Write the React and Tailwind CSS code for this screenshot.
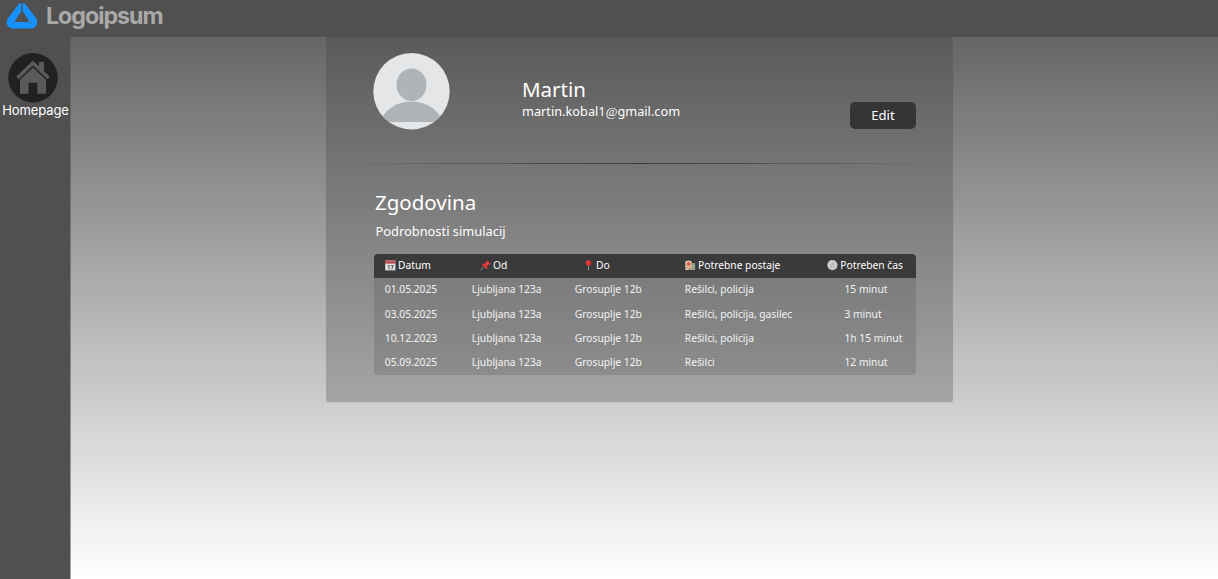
const text = "font-['Noto_Sans','Open_Sans',sans-serif]";

function LogoMark() {
  return (
    <svg className="h-[26px] w-8 shrink-0" viewBox="0 0 32 26" fill="none">
      <path d="M15.300 0C14 .1 12.900 .8 12 2L1.800 15.500C-.8 19.300 1.500 25.400 6.500 25.400h19c5 0 7.300-6.100 4.700-9.900L20 2C19.100 .8 18 .1 16.700 0v8L22.600 17.200c.6 1 .2 1.800-.8 1.800H10.200c-1 0-1.400-.8-.8-1.800L15.300 8Z" fill="#1492ff" />
      <path d="M10 18.700 6.200 20M22 18.700 25.800 20" stroke="#4b6a88" strokeWidth=".8" />
    </svg>
  );
}

function HomeIcon() {
  return (
    <svg className="size-[50px]" viewBox="0 0 50 50">
      <circle cx="25" cy="24.700" r="24.700" fill="#212121" />
      <g fill="#5a5a5a">
        <path d="M25 7.600 31 13.200V8.800h5v9.200l5.700 5.600-2.200 2.700L25 12.600 10.500 26.300l-2.200-2.700Z" />
        <path d="M25 14.500 38 26.800V40.700h-8.700V29.800h-8.800v10.900H12V26.800Z" />
      </g>
    </svg>
  );
}

function Avatar() {
  return (
    <svg className="size-[77px] shrink-0" viewBox="0 0 77 77">
      <defs>
        <clipPath id="avatar-circle"><circle cx="38.500" cy="38.300" r="38.200" /></clipPath>
      </defs>
      <g clipPath="url(#avatar-circle)">
        <rect width="77" height="77" fill="#e4e6e8" />
        <ellipse cx="38.500" cy="31.800" rx="15" ry="16.200" fill="#aeb4b8" />
        <path d="M7 69C12 56 24 48.500 38.500 48.500S65 56 70 69Z" fill="#aeb4b8" />
      </g>
    </svg>
  );
}

function CalendarIcon() {
  return (
    <svg className="h-[11px] w-[11px]" viewBox="0 0 11 11">
      <rect x=".2" y=".2" width="10.200" height="10.200" fill="#dedede" />
      <rect x=".2" y=".2" width="10.200" height="3.400" fill="#b9474b" />
      <path d="M2 1.200h1M4.200 1.200h1M6.400 1.200h1M8.500 1.200h1" stroke="#ddd" strokeWidth=".6" />
      <path d="M3 6 4 5.300V9.300M5.600 5.600h2.600L6.700 9.300" fill="none" stroke="#444" strokeWidth=".9" />
    </svg>
  );
}

function PushpinIcon() {
  return (
    <svg className="h-[11px] w-[11px]" viewBox="0 0 11 11">
      <path d="M4.300 6.500.6 10.300" stroke="#aaa" strokeWidth=".8" />
      <path d="m7.100.2 3.700 3.700-1.200.7-.9-.1-1.500 1.700.2 2.300-.9.800L1.700 4.500l.9-.8 2.200.1 1.700-1.700-.1-1.100Z" fill="#d93636" />
      <path d="m5.500 4.800 2-2" stroke="#f27777" strokeWidth=".7" />
    </svg>
  );
}

function RoundPinIcon() {
  return (
    <svg className="h-[11px] w-[11px]" viewBox="0 0 11 11">
      <path d="M5.500 4v6.700" stroke="#999" strokeWidth=".9" />
      <circle cx="5.500" cy="2.900" r="2.700" fill="#e23030" />
      <circle cx="4.700" cy="2.100" r=".7" fill="#f17b75" />
    </svg>
  );
}

function StationIcon() {
  return (
    <svg className="h-[11px] w-[11px]" viewBox="0 0 11 11">
      <path d="M.3 1.200 3.500.4l3.200.8v8.800H.3Z" fill="#e0c8a0" />
      <path d="M6.200 3.200h3.900V10H6.200Z" fill="#a9ac88" />
      <path d="M7 4.700h.9M8.700 4.700h.9M7 6.700h.9M8.700 6.700h.9M7 8.700h.9M8.700 8.700h.9" stroke="#6f98a4" />
      <circle cx="3.600" cy="3.900" r="2" fill="#e5594f" />
      <path d="M1.100 7h1.300v1.500H1.100ZM3.700 7.500h1.800V10H3.700Z" fill="#a57561" />
    </svg>
  );
}

function ClockIcon() {
  return (
    <svg className="h-[11px] w-[11px]" viewBox="0 0 11 11">
      <circle cx="5.400" cy="5.100" r="5.100" fill="#cecece" />
      <path d="M5.500 1.500v4.200M4 4v5M7 5v4" stroke="#a0a0a0" strokeWidth=".7" />
    </svg>
  );
}

const columns = [
  { label: "Datum", Icon: CalendarIcon, pad: "pl-0" },
  { label: "Od", Icon: PushpinIcon, pad: "pl-2" },
  { label: "Do", Icon: RoundPinIcon, pad: "pl-2" },
  { label: "Potrebne postaje", Icon: StationIcon, pad: "pl-0" },
  { label: "Potreben čas", Icon: ClockIcon, pad: "pl-0 -ml-[17.500px]" },
];

const rows = [
  ["01.05.2025", "Ljubljana 123a", "Grosuplje 12b", "Rešilci, policija", "15 minut"],
  ["03.05.2025", "Ljubljana 123a", "Grosuplje 12b", "Rešilci, policija, gasilec", "3 minut"],
  ["10.12.2023", "Ljubljana 123a", "Grosuplje 12b", "Rešilci, policija", "1h 15 minut"],
  ["05.09.2025", "Ljubljana 123a", "Grosuplje 12b", "Rešilci", "12 minut"],
];

const grid = "grid grid-cols-[87px_103px_110px_159.700px_1fr] items-center pl-[10.800px] whitespace-nowrap";

export default function App() {
  return (
    <div className={`flex h-[579px] w-full flex-col overflow-hidden bg-[#505050] text-white ${text}`}>
      <header className="flex h-[37px] shrink-0 items-start gap-2 pl-1.5 pt-[3px]">
        <LogoMark />
        <span className="font-['Inter',sans-serif] text-[23.200px] font-bold leading-[26px] tracking-[-1px] text-[#a9a9a9]">Logoipsum</span>
      </header>
      <div className="flex min-h-0 flex-1">
        <nav className="flex w-[70px] shrink-0 flex-col items-center pt-4">
          <a className="flex flex-col items-start">
            <span className="ml-[7px] block"><HomeIcon /></span>
            <span className="ml-px font-['Inter',sans-serif] text-[13px] leading-[15px] tracking-[-0.120px]">Homepage</span>
          </a>
        </nav>
        <main className="flex-1 border-l border-[#505050]/50 bg-linear-to-b/srgb from-[#666666] to-white pl-[255px]">
          <section className="h-[364.500px] w-[627px] rounded-b-[3px] bg-[#3c3c3c]/28 pt-4 shadow-[0_1px_1px_rgba(0,0,0,0.05)]">
            <div className="flex h-[77px] items-start pl-[47px]">
              <Avatar />
              <div className="ml-[72px] w-[328px] pt-[22px]">
                <h1 className="text-[20.500px] leading-7">Martin</h1>
                <p className="text-[12.750px] leading-4">martin.kobal1<span className="font-['Liberation_Serif',serif]">@</span>gmail.com</p>
              </div>
              <button className="mt-[48.500px] h-[27.500px] w-[66px] rounded-[5px] bg-[#353535] text-[13px] leading-[27px]">Edit</button>
            </div>
            <div className="mx-[12px] mt-[33px] h-px bg-linear-to-r from-transparent via-black/50 to-transparent" />
            <h2 className="ml-[49px] mt-[24px] text-[20.500px] leading-7">Zgodovina</h2>
            <p className="ml-[49.500px] mt-[6px] text-[12.850px] leading-[18px]">Podrobnosti simulacij</p>
            <div className="ml-12 mt-[14px] h-[121px] w-[542px] overflow-hidden rounded-[4px] bg-[#353535]/18 text-[10.250px]">
              <div className={`${grid} h-6 bg-[#3a3a3a]`}>
                {columns.map(({ label, Icon, pad }) => (
                  <div key={label} className={`flex items-center gap-[2.300px] ${pad}`}>
                    <span className="-mt-px"><Icon /></span>
                    <span>{label}</span>
                  </div>
                ))}
              </div>
              {rows.map((row) => (
                <div key={row[0]} className={`${grid} h-[24.200px] text-white/90`}>
                  {row.map((cell, i) => <span key={i}>{cell}</span>)}
                </div>
              ))}
            </div>
          </section>
        </main>
      </div>
    </div>
  );
}
